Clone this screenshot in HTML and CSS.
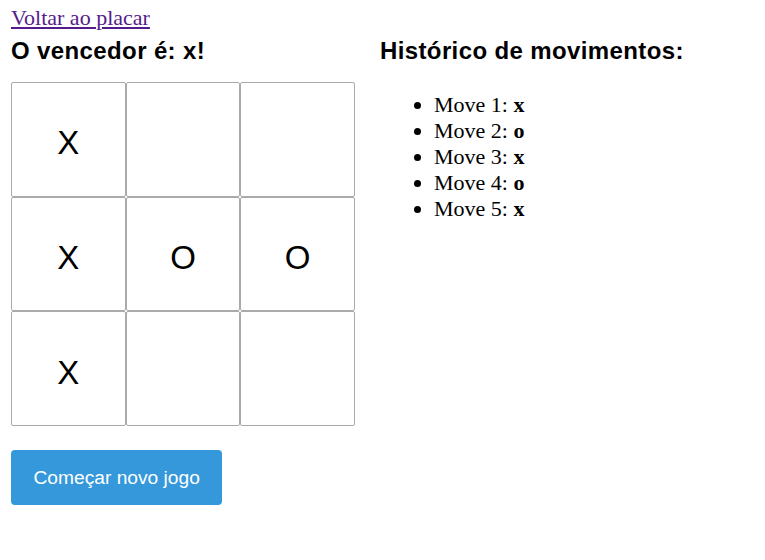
FILE: index.html
```html
<!DOCTYPE html>
<html lang="pt">
<head>
<meta charset="utf-8">
<title>Jogo da velha</title>
<link rel="stylesheet" href="styles.css">
</head>
<body>
<div class="app">
  <a class="back" href="#">Voltar ao placar</a>
  <div class="game">
    <div class="board-col">
      <h2 class="title">O vencedor é: x!</h2>
      <div class="board">
        <button class="cell">X</button>
        <button class="cell"></button>
        <button class="cell"></button>
        <button class="cell">X</button>
        <button class="cell">O</button>
        <button class="cell">O</button>
        <button class="cell">X</button>
        <button class="cell"></button>
        <button class="cell"></button>
      </div>
      <button class="new-game">Começar novo jogo</button>
    </div>
    <div class="history">
      <h2 class="title">Histórico de movimentos:</h2>
      <ul class="moves">
        <li>Move 1: <b>x</b></li>
        <li>Move 2: <b>o</b></li>
        <li>Move 3: <b>x</b></li>
        <li>Move 4: <b>o</b></li>
        <li>Move 5: <b>x</b></li>
      </ul>
    </div>
  </div>
</div>
</body>
</html>
```
FILE: styles.css
```css
html, body {
  margin: 0;
  background: #fff;
}
.app {
  padding: 6px 11px;
  font-family: "Liberation Serif", "Times New Roman", serif;
}
.back {
  display: block;
  width: max-content;
  font-size: 22px;
  line-height: 24px;
  color: #551a8b;
  text-decoration: underline;
}
.game {
  display: flex;
  gap: 25px;
  margin-top: 7px;
}
.board-col {
  width: 344px;
  display: flex;
  flex-direction: column;
  align-items: flex-start;
}
.title {
  margin: 0;
  font-family: "Liberation Sans", Arial, sans-serif;
  font-size: 24px;
  font-weight: bold;
  letter-spacing: 0.38px;
  line-height: 28px;
  color: #000;
}
.board {
  margin-top: 17px;
  width: 344px;
  height: 344px;
  display: grid;
  grid-template-columns: repeat(3, 1fr);
  grid-template-rows: repeat(3, 1fr);
}
.cell {
  margin: 0;
  padding: 8px 0 0;
  background: #fff;
  border: 1px solid #aaa;
  border-radius: 2px;
  font-family: "Liberation Sans", Arial, sans-serif;
  font-size: 33px;
  color: #000;
  line-height: 38px;
}
.new-game {
  margin-top: 24px;
  padding: 16px 22.5px;
  border: none;
  border-radius: 4px;
  background: #3498db;
  color: #fff;
  font-family: "Liberation Sans", Arial, sans-serif;
  font-size: 19.2px;
  line-height: 23px;
}
.history {
  flex: 1;
}
.moves {
  margin: 27px 0 0;
  padding-left: 54px;
  font-size: 22px;
  line-height: 26px;
  color: #000;
}
```
